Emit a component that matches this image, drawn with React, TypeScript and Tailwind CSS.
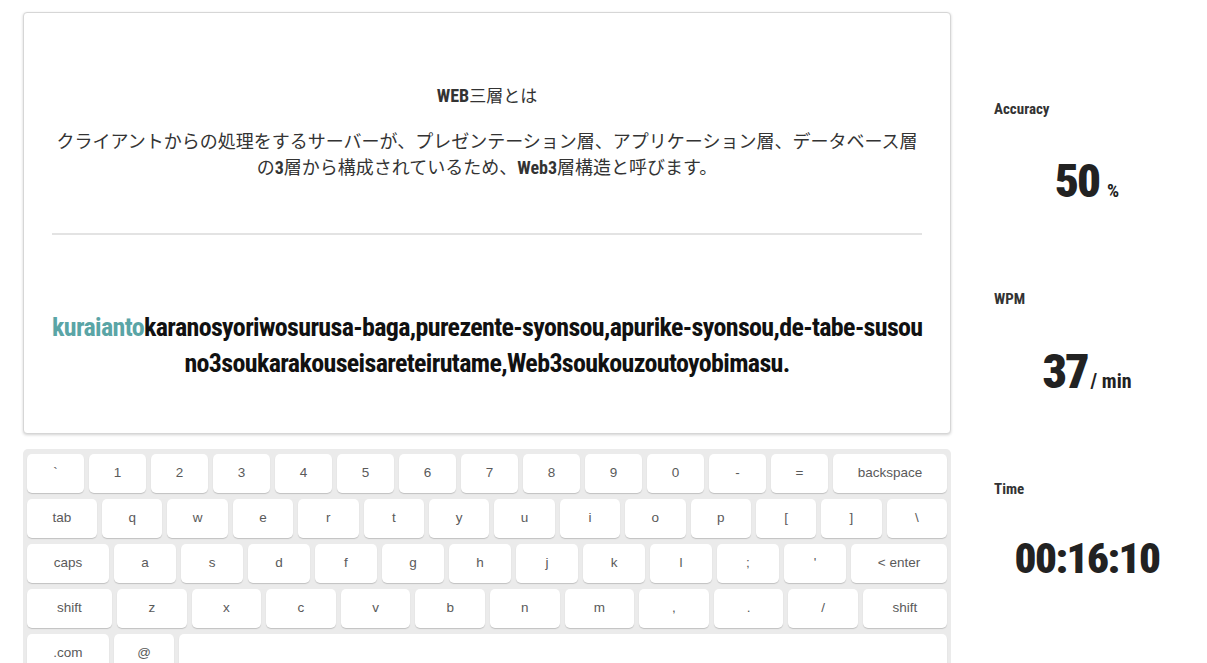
// タイピング練習画面（問題カード、キーボード、スコア）
import type { ReactNode } from 'react'

const condensed = "font-['Roboto','Noto_Sans_CJK_JP',sans-serif] font-stretch-condensed"
const jp = "font-['Noto_Sans_CJK_JP','Liberation_Sans',sans-serif]"

type KeyDef = { label: string; w?: string }

const rows: KeyDef[][] = [
  [
    ...['`', '1', '2', '3', '4', '5', '6', '7', '8', '9', '0', '-', '='].map((k) => ({ label: k, w: 'w-[57px]' })),
    { label: 'backspace', w: 'flex-1' },
  ],
  [
    { label: 'tab', w: 'w-[70px]' },
    ...['q', 'w', 'e', 'r', 't', 'y', 'u', 'i', 'o', 'p', '[', ']', '\\'].map((k) => ({ label: k, w: 'flex-1' })),
  ],
  [
    { label: 'caps', w: 'w-[82px]' },
    ...['a', 's', 'd', 'f', 'g', 'h', 'j', 'k', 'l', ';', "'"].map((k) => ({ label: k, w: 'w-[62px]' })),
    { label: '< enter', w: 'flex-1' },
  ],
  [
    { label: 'shift', w: 'w-[85px]' },
    ...['z', 'x', 'c', 'v', 'b', 'n', 'm', ',', '.', '/'].map((k) => ({ label: k, w: 'flex-1' })),
    { label: 'shift', w: 'w-[84px]' },
  ],
  [
    { label: '.com', w: 'w-[82px]' },
    { label: '@', w: 'w-[60px]' },
    { label: '', w: 'flex-1' },
  ],
]

function Key({ label, w }: KeyDef) {
  return (
    <div
      className={`${w} h-[39px] shrink-0 bg-white rounded-[5px] shadow-[0_1px_1px_rgba(0,0,0,0.18)] flex items-center justify-center text-[13.5px] text-[#5a5a5a] font-['Liberation_Sans',sans-serif]`}
    >
      {label}
    </div>
  )
}

function Stat({ label, children }: { label: string; children: ReactNode }) {
  return (
    <div className="h-[190px] flex flex-col">
      <div className={`h-[20px] leading-[20px] text-[15px] font-bold text-[#333] ${condensed}`}>{label}</div>
      <div className={`mt-[27px] h-[60px] flex items-baseline justify-center text-[#222] font-black ${condensed}`}>
        {children}
      </div>
    </div>
  )
}

export default function App() {
  return (
    <div className="flex w-[1207px] h-[663px] overflow-hidden bg-white">
      {/* 左カラム */}
      <div className="ml-[23px] mt-[12px] w-[928px] shrink-0 flex flex-col">
        {/* 問題カード */}
        <div className="h-[422px] shrink-0 bg-white border border-[#d6d6d6] rounded-[4px] shadow-[0_1px_3px_rgba(0,0,0,0.18)] px-[28px] pt-[70px] text-center">
          <div className={`h-[24px] leading-[24px] text-[17px] text-[#333] ${jp}`}>
            <span className={`font-bold text-[18px] ${condensed}`}>WEB</span>三層とは
          </div>
          <p className={`mt-[20px] text-[18px] leading-[26px] text-[#333] whitespace-nowrap ${jp}`}>
            クライアントからの処理をするサーバーが、プレゼンテーション層、アプリケーション層、データベース層
            <br />
            の<span className={`font-bold ${condensed}`}>3</span>層から構成されているため、
            <span className={`font-bold ${condensed}`}>Web3</span>層構造と呼びます。
          </p>
          <hr className="mt-[52px] border-0 h-[2px] bg-[#e3e3e3]" />
          <div className={`mt-[74px] text-[26px] leading-[36px] tracking-[-0.65px] font-bold text-[#111] whitespace-nowrap ${condensed}`}>
            <div>
              <span className="text-[#5aa5a6]">kuraianto</span>
              karanosyoriwosurusa-baga,purezente-syonsou,apurike-syonsou,de-tabe-susou
            </div>
            <div>no3soukarakouseisareteirutame,Web3soukouzoutoyobimasu.</div>
          </div>
        </div>

        {/* キーボード */}
        <div className="mt-[15px] flex-1 bg-[#ebebeb] rounded-t-[5px] p-[4px] pt-[5px] flex flex-col gap-[6px]">
          {rows.map((row, i) => (
            <div key={i} className="flex gap-[5px]">
              {row.map((k, j) => (
                <Key key={j} {...k} />
              ))}
            </div>
          ))}
        </div>
      </div>

      {/* 右カラム */}
      <div className="flex-1 pl-[43px] pr-[27px] pt-[99px]">
        <Stat label="Accuracy">
          <span className="text-[47px] tracking-[-2px]">50</span>
          <span className="ml-[8px] text-[19px] font-bold">%</span>
        </Stat>
        <Stat label="WPM">
          <span className="text-[48px] tracking-[-2px]">37</span>
          <span className="ml-[3px] text-[20px] font-bold">/ min</span>
        </Stat>
        <Stat label="Time">
          <span className="text-[43px] tracking-[-1.5px]">00:16:10</span>
        </Stat>
      </div>
    </div>
  )
}
